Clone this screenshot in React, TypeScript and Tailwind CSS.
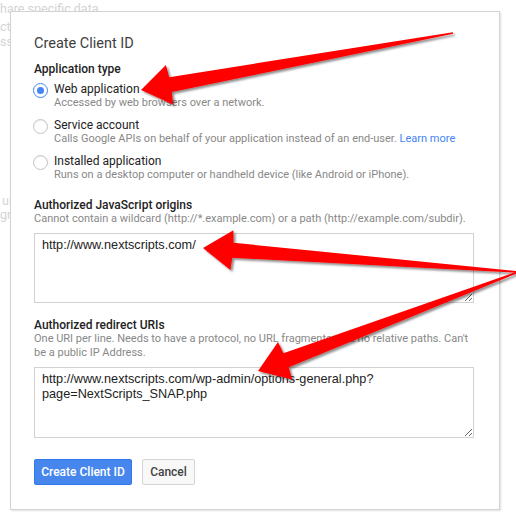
import React from "react";

type Pt = [number, number];

interface ArrowSpec {
  tip: Pt;
  tail: Pt;
}

// red pointer arrows drawn over the dialog
const ARROWS: ArrowSpec[] = [
  { tip: [141, 90], tail: [453, 33] },
  { tip: [203, 248], tail: [518, 272] },
  { tip: [258, 371], tail: [518, 272] },
];

function arrowPoints({ tip, tail }: ArrowSpec) {
  const dx = tail[0] - tip[0];
  const dy = tail[1] - tip[1];
  const len = Math.hypot(dx, dy);
  const ux = dx / len;
  const uy = dy / len;
  const nx = -uy;
  const ny = ux;
  const p = (a: number, b: number) =>
    `${(tip[0] + ux * a + nx * b).toFixed(1)},${(tip[1] + uy * a + ny * b).toFixed(1)}`;

  return [
    p(0, 0),
    p(29, -20),
    p(30, -7.5),
    p(len, -0.8),
    p(len, 0.8),
    p(30, 7.5),
    p(29, 20),
  ].join(" ");
}

function Arrows() {
  return (
    <svg
      className="pointer-events-none absolute left-0 top-0"
      width={516}
      height={531}
      viewBox="0 0 516 531"
    >
      <defs>
        <filter id="arrowShadow" x="-10%" y="-10%" width="120%" height="130%">
          <feDropShadow dx="2" dy="2" stdDeviation="1.2" floodColor="#000" floodOpacity="0.45" />
        </filter>
      </defs>
      {ARROWS.map((a, i) => (
        <polygon key={i} points={arrowPoints(a)} fill="#ff0000" filter="url(#arrowShadow)" />
      ))}
    </svg>
  );
}

// page text lying behind the dialog
function Backdrop() {
  return (
    <div className="absolute left-0 top-0 flex flex-col text-[12.5px] leading-[14px] text-[#d4d4d4]">
      <span className="mt-[2px]">hare specific data</span>
      <span className="mt-[4px]">ct</span>
      <span className="mt-[1px]">ss</span>
      <span className="mt-[145px] pl-[2px]">ui</span>
      <span>gr</span>
    </div>
  );
}

function Radio({ checked }: { checked?: boolean }) {
  if (checked) {
    return (
      <span className="-ml-[1px] mt-[1px] flex h-[15px] w-[15px] shrink-0 items-center justify-center rounded-full border-[1.5px] border-[#4285f4] bg-white">
        <span className="h-[7px] w-[7px] rounded-full bg-[#4285f4]" />
      </span>
    );
  }
  return (
    <span className="-ml-[1px] mt-[1px] h-[15px] w-[15px] shrink-0 rounded-full border border-[#c4c4c4] bg-white shadow-[inset_0_1px_1px_rgba(0,0,0,0.08)]" />
  );
}

function RadioItem({
  label,
  checked,
  children,
}: {
  label: string;
  checked?: boolean;
  children: React.ReactNode;
}) {
  return (
    <div className="flex items-start gap-[6px]">
      <Radio checked={checked} />
      <div className="flex flex-col">
        <span className="text-[12px] leading-[14px] text-[#222]">{label}</span>
        <span className="text-[11px] leading-[14px] text-[#888]">{children}</span>
      </div>
    </div>
  );
}

function Field({ value, height }: { value: string; height: string }) {
  return (
    <textarea
      defaultValue={value}
      spellCheck={false}
      className={`${height} mt-[7px] block w-[440px] border border-[#d2d2d2] bg-white px-[7px] pt-[4px] font-['Liberation_Sans',Arial,sans-serif] text-[12.7px] leading-[14.5px] text-[#222] outline-none`}
    />
  );
}

export default function App() {
  return (
    <div className="relative h-[531px] w-[516px] overflow-hidden bg-white pl-[10px] pt-[11px] font-[Roboto,'Liberation_Sans',sans-serif]">
      <Backdrop />

      <div className="relative h-[499px] w-[490px] border border-[#d3d3d3] bg-white pl-[23px] pt-[23px] shadow-[1px_1px_2px_rgba(0,0,0,0.12)]">
        <h2 className="text-[14.5px] leading-[17px] text-[#404040]">Create Client ID</h2>

        <div className="mt-[10px] text-[12px] font-medium leading-[14px] text-[#222]">
          Application type
        </div>

        <div className="mt-[6px] flex flex-col gap-[8px]">
          <RadioItem label="Web application" checked>
            Accessed by web browsers over a network.
          </RadioItem>
          <RadioItem label="Service account">
            Calls Google APIs on behalf of your application instead of an end-user.{" "}
            <a className="text-[#4285f4]">Learn more</a>
          </RadioItem>
          <RadioItem label="Installed application">
            Runs on a desktop computer or handheld device (like Android or iPhone).
          </RadioItem>
        </div>

        {/* Origins */}
        <div className="mt-[16px] text-[12px] font-medium leading-[14px] text-[#222]">
          Authorized JavaScript origins
        </div>
        <p className="text-[11px] leading-[14px] text-[#888]">
          Cannot contain a wildcard (http://*.example.com) or a path (http://example.com/subdir).
        </p>
        <Field value="http://www.nextscripts.com/" height="h-[70px]" />

        {/* Redirect URIs */}
        <div className="mt-[15px] text-[12px] font-medium leading-[14px] text-[#222]">
          Authorized redirect URIs
        </div>
        <p className="text-[11px] leading-[14px] text-[#888]">
          One URI per line. Needs to have a protocol, no URL fragments, and no relative paths. Can't
          <br />
          be a public IP Address.
        </p>
        <Field
          value={"http://www.nextscripts.com/wp-admin/options-general.php?\npage=NextScripts_SNAP.php"}
          height="h-[71px]"
        />

        <div className="mt-[21px] flex gap-[10px]">
          <button className="flex h-[26px] w-[98px] items-center justify-center rounded-[2px] border border-[#3079ed] bg-[#4787ed] text-[12px] font-medium text-white">
            Create Client ID
          </button>
          <button className="flex h-[26px] w-[53px] items-center justify-center rounded-[2px] border border-[#d6d6d6] bg-[#f8f8f8] text-[12px] font-medium text-[#444]">
            Cancel
          </button>
        </div>
      </div>

      <Arrows />
    </div>
  );
}
